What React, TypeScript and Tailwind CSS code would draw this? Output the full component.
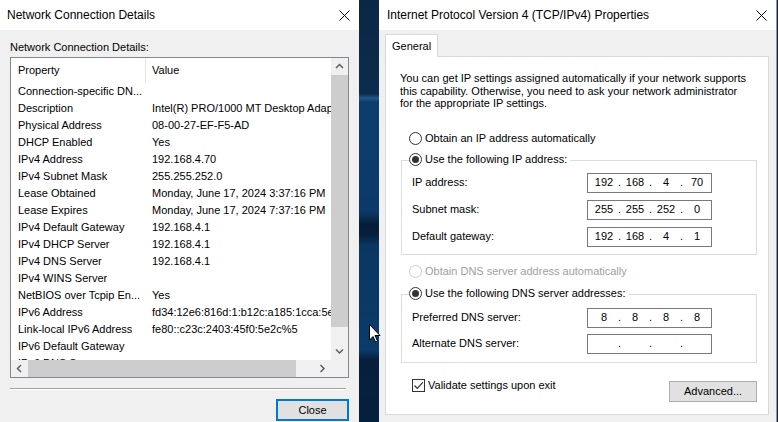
import React from "react";

const rows: [string, string][] = [
  ["Connection-specific DN...", ""],
  ["Description", "Intel(R) PRO/1000 MT Desktop Adapter"],
  ["Physical Address", "08-00-27-EF-F5-AD"],
  ["DHCP Enabled", "Yes"],
  ["IPv4 Address", "192.168.4.70"],
  ["IPv4 Subnet Mask", "255.255.252.0"],
  ["Lease Obtained", "Monday, June 17, 2024 3:37:16 PM"],
  ["Lease Expires", "Monday, June 17, 2024 7:37:16 PM"],
  ["IPv4 Default Gateway", "192.168.4.1"],
  ["IPv4 DHCP Server", "192.168.4.1"],
  ["IPv4 DNS Server", "192.168.4.1"],
  ["IPv4 WINS Server", ""],
  ["NetBIOS over Tcpip En...", "Yes"],
  ["IPv6 Address", "fd34:12e6:816d:1:b12c:a185:1cca:5e4f"],
  ["Link-local IPv6 Address", "fe80::c23c:2403:45f0:5e2c%5"],
  ["IPv6 Default Gateway", ""],
  ["IPv6 DNS Server", ""],
];

function CloseX() {
  return (
    <svg width="11" height="11" viewBox="0 0 11 11">
      <path d="M0.5 0.5 L10.5 10.5 M10.5 0.5 L0.5 10.5" stroke="#000" strokeWidth="1" />
    </svg>
  );
}

function Chevron({ dir }: { dir: "up" | "down" | "left" | "right" }) {
  const d =
    dir === "up"
      ? "M1 5 L4.5 1.5 L8 5"
      : dir === "down"
      ? "M1 1.5 L4.5 5 L8 1.5"
      : dir === "left"
      ? "M5 1 L1.5 4.5 L5 8"
      : "M1.5 1 L5 4.5 L1.5 8";
  const vert = dir === "up" || dir === "down";
  return (
    <svg width={vert ? 9 : 7} height={vert ? 7 : 9} viewBox={vert ? "0 0 9 7" : "0 0 7 9"}>
      <path d={d} stroke="#606060" strokeWidth="1.5" fill="none" />
    </svg>
  );
}

function IpBox({ parts }: { parts: string[] }) {
  return (
    <div className="w-[125px] h-[20px] border border-[#7a7a7a] bg-white flex items-center pl-[3px]">
      {parts.map((p, i) => (
        <React.Fragment key={i}>
          <span className="w-[26px] text-center">{p}</span>
          {i < 3 && <span className="w-[5px] text-center">.</span>}
        </React.Fragment>
      ))}
    </div>
  );
}

function Radio({ checked, disabled }: { checked?: boolean; disabled?: boolean }) {
  return (
    <span
      className={
        "w-[13px] h-[13px] rounded-full border bg-white flex items-center justify-center shrink-0 " +
        (disabled ? "border-[#cccccc]" : "border-[#333333]")
      }
    >
      {checked && <span className="w-[7px] h-[7px] rounded-full bg-[#333333]" />}
    </span>
  );
}

function FieldRow({ label, parts, first }: { label: string; parts: string[]; first?: boolean }) {
  return (
    <div className={"flex items-center " + (first ? "mt-[6px]" : "mt-[7px]")}>
      <span className="w-[185px] pl-[10px]">{label}</span>
      <IpBox parts={parts} />
    </div>
  );
}

export default function App() {
  return (
    <div className="relative w-[778px] h-[422px] overflow-hidden flex font-['Liberation_Sans',Arial,sans-serif] text-black bg-[#071f3b]">
      {/* Left window */}
      <div className="w-[359px] h-full flex flex-col bg-[#f0f0f0] shrink-0">
        <div className="h-[30px] bg-white flex items-center justify-between pl-[7px] pr-[9px] text-[12px] shrink-0">
          <span>Network Connection Details</span>
          <CloseX />
        </div>
        <div className="flex flex-col px-[10px] text-[11px]">
          <div className="mt-[10px] h-[14px] leading-[14px]">Network Connection Details:</div>
          <div className="mt-[3px] w-[339px] h-[321px] border border-[#828790] bg-white flex">
            <div className="w-[320px] flex flex-col">
              <div className="h-[302px] overflow-hidden">
                <div className="h-[25px] flex items-center">
                  <span className="w-[134px] pl-[7px]">Property</span>
                  <span className="w-px h-full bg-[#e5e5e5]" />
                  <span className="pl-[6px]">Value</span>
                </div>
                {rows.map(([k, v]) => (
                  <div key={k} className="h-[17px] flex items-center whitespace-nowrap">
                    <span className="w-[135px] pl-[7px] shrink-0">{k}</span>
                    <span className="pl-[6px]">{v}</span>
                  </div>
                ))}
              </div>
              <div className="h-[17px] flex bg-[#f0f0f0]">
                <div className="w-[17px] flex items-center justify-center">
                  <Chevron dir="left" />
                </div>
                <div className="w-[268px] bg-[#cdcdcd]" />
                <div className="flex-1" />
                <div className="w-[17px] flex items-center justify-center">
                  <Chevron dir="right" />
                </div>
              </div>
            </div>
            <div className="w-[17px] flex flex-col bg-[#f0f0f0]">
              <div className="h-[17px] flex items-center justify-center">
                <Chevron dir="up" />
              </div>
              <div className="h-[252px] bg-[#cdcdcd]" />
              <div className="flex-1" />
              <div className="h-[17px] flex items-center justify-center">
                <Chevron dir="down" />
              </div>
              <div className="h-[17px] bg-[#f0f0f0]" />
            </div>
          </div>
          <div className="mt-[10px] w-[336px] h-px bg-[#a0a0a0]" />
          <div className="w-[336px] h-px bg-white" />
          <div className="mt-[9px] self-end w-[73px] h-[22px] border-2 border-[#0078d7] bg-[#e1e1e1] flex items-center justify-center">
            Close
          </div>
        </div>
      </div>

      {/* Desktop strip */}
      <div className="w-[20px] h-full shrink-0 bg-[linear-gradient(to_bottom,#0a2846_0px,#0b2c4c_94px,#24588a_98px,#0d3d6c_102px,#0b3a68_212px,#061d38_224px,#061f3a_234px,#0a3762_246px,#0b3b6a_350px,#061f3c_360px,#05203d_422px)]" />

      {/* Right window */}
      <div className="w-[398px] h-full flex flex-col bg-[#f0f0f0] shrink-0 border-r border-[#9a9a9a]">
        <div className="h-[30px] bg-white flex items-center justify-between pl-[8px] pr-[9px] text-[12px] shrink-0">
          <span>Internet Protocol Version 4 (TCP/IPv4) Properties</span>
          <CloseX />
        </div>
        <div className="pl-[6px] text-[11px] flex flex-col">
          <div className="mt-[4px] w-[53px] h-[23px] border border-b-0 border-[#d9d9d9] bg-white flex items-center pl-[6px] relative z-10 -mb-px">
            General
          </div>
          <div className="w-[384px] h-[359px] border border-[#d9d9d9] bg-white flex flex-col">
            <div className="mt-[15px] ml-[14px] leading-[12.5px]">
              You can get IP settings assigned automatically if your network supports
              <br />
              this capability. Otherwise, you need to ask your network administrator
              <br />
              for the appropriate IP settings.
            </div>
            <div className="mt-[22px] ml-[23px] h-[14px] flex items-center">
              <Radio />
              <span className="ml-[3px]">Obtain an IP address automatically</span>
            </div>
            <div className="mt-[14px] ml-[15px] w-[356px] border border-[#dcdcdc] pb-[7px]">
              <div className="-mt-[8px] ml-[7px] h-[14px] flex items-center bg-white w-fit pr-[3px]">
                <Radio checked />
                <span className="ml-[3px]">Use the following IP address:</span>
              </div>
              <FieldRow first label="IP address:" parts={["192", "168", "4", "70"]} />
              <FieldRow label="Subnet mask:" parts={["255", "255", "252", "0"]} />
              <FieldRow label="Default gateway:" parts={["192", "168", "4", "1"]} />
            </div>
            <div className="mt-[10px] ml-[23px] h-[14px] flex items-center text-[#a0a0a0]">
              <Radio disabled />
              <span className="ml-[3px]">Obtain DNS server address automatically</span>
            </div>
            <div className="mt-[15px] ml-[15px] w-[356px] border border-[#dcdcdc] pb-[8px]">
              <div className="-mt-[8px] ml-[7px] h-[14px] flex items-center bg-white w-fit pr-[3px]">
                <Radio checked />
                <span className="ml-[3px]">Use the following DNS server addresses:</span>
              </div>
              <div className="flex items-center mt-[7px]">
                <span className="w-[185px] pl-[10px]">Preferred DNS server:</span>
                <IpBox parts={["8", "8", "8", "8"]} />
              </div>
              <div className="flex items-center mt-[6px]">
                <span className="w-[185px] pl-[10px]">Alternate DNS server:</span>
                <IpBox parts={["", "", "", ""]} />
              </div>
            </div>
            <div className="mt-[16px] ml-[26px] mr-[11px] flex items-start justify-between">
              <div className="h-[14px] flex items-center">
                <span className="w-[13px] h-[13px] border border-[#333333] bg-white flex items-center justify-center">
                  <svg width="11" height="11" viewBox="0 0 11 11">
                    <path d="M1.5 5.5 L4.3 8.3 L9.8 2.3" stroke="#333" strokeWidth="1.2" fill="none" />
                  </svg>
                </span>
                <span className="ml-[3px]">Validate settings upon exit</span>
              </div>
              <div className="mt-[2px] w-[88px] h-[21px] border border-[#adadad] bg-[#e1e1e1] flex items-center justify-center">
                Advanced...
              </div>
            </div>
          </div>
        </div>
      </div>

      {/* Mouse cursor */}
      <svg
        className="absolute left-[369px] top-[324px]"
        width="12"
        height="19"
        viewBox="0 0 12 19"
      >
        <path
          d="M0.5 0.5 L0.5 16 L4 12.5 L6.5 18 L8.5 17 L6 11.5 L11 11.5 Z"
          fill="#fff"
          stroke="#000"
          strokeWidth="1"
        />
      </svg>
    </div>
  );
}
